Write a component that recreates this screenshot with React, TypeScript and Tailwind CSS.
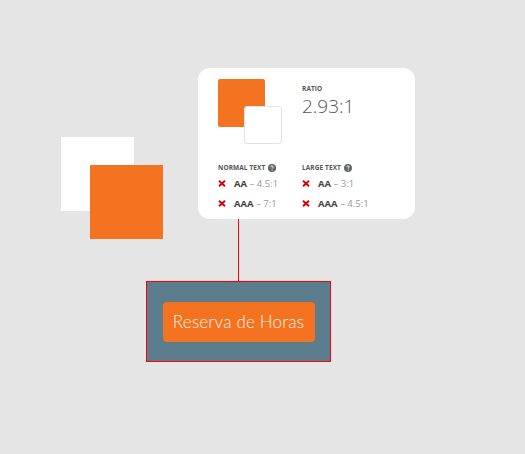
import type { ReactNode } from 'react'

const ORANGE = 'bg-[#f47321]'

function CrossIcon() {
  return (
    <svg width="8" height="7" viewBox="0 0 8 7" className="shrink-0">
      <path d="M1 0.8 L7 6.2 M7 0.8 L1 6.2" stroke="#d40000" strokeWidth="1.9" strokeLinecap="butt" />
    </svg>
  )
}

function HelpIcon() {
  return (
    <svg width="8" height="8" viewBox="0 0 8 8" className="shrink-0">
      <circle cx="4" cy="4" r="4" fill="#666" />
      <path d="M2.8 3.1 C2.8 2.3 3.3 1.9 4 1.9 C4.7 1.9 5.2 2.3 5.2 2.9 C5.2 3.6 4.2 3.7 4.2 4.6" stroke="#fff" strokeWidth="0.9" fill="none" />
      <circle cx="4.2" cy="6" r="0.55" fill="#fff" />
    </svg>
  )
}

function Label({ children }: { children: ReactNode }) {
  return <div className="text-[6.5px] font-bold uppercase leading-[8px] tracking-[0.1px] text-[#555]">{children}</div>
}

function Check({ level, ratio }: { level: string; ratio: string }) {
  return (
    <div className="flex h-[20px] items-center gap-[8px] text-[9.5px] leading-none">
      <CrossIcon />
      <span>
        <span className="font-bold text-[#444]">{level}</span>
        <span className="text-[#999]"> – {ratio}</span>
      </span>
    </div>
  )
}

function ContrastCard() {
  return (
    <div className="grid h-[151px] w-[217px] grid-cols-[84px_1fr] rounded-[12px] bg-white pl-[20px] pt-[11px] font-['Open_Sans',sans-serif]">
      <div className="relative h-[65px] w-[64px]">
        <div className={`absolute left-0 top-0 h-[48px] w-[47px] rounded-[2px] ${ORANGE}`} />
        <div className="absolute left-[26px] top-[27px] h-[38px] w-[38px] rounded-[3px] border border-[#e2e2e2] bg-white" />
      </div>
      <div className="pt-[6px]">
        <Label>Ratio</Label>
        <div className="mt-[2px] text-[19px] font-light leading-[22px] text-[#555]">2.93:1</div>
      </div>

      <div className="mt-[14px]">
        <div className="flex items-center gap-[3px]">
          <Label>Normal text</Label>
          <HelpIcon />
        </div>
        <div className="mt-[2px]">
          <Check level="AA" ratio="4.5:1" />
          <Check level="AAA" ratio="7:1" />
        </div>
      </div>
      <div className="mt-[14px]">
        <div className="flex items-center gap-[3px]">
          <Label>Large text</Label>
          <HelpIcon />
        </div>
        <div className="mt-[2px]">
          <Check level="AA" ratio="3:1" />
          <Check level="AAA" ratio="4.5:1" />
        </div>
      </div>
    </div>
  )
}

export default function App() {
  return (
    <div className="h-[454px] w-full overflow-hidden bg-[#e5e5e5]">
      <div className="flex items-start pt-[68px]">
        <div className="relative ml-[61px] mt-[69px] h-[102px] w-[102px] shrink-0">
          <div className="absolute left-0 top-0 h-[74px] w-[73px] bg-white" />
          <div className={`absolute left-[29px] top-[28px] h-[74px] w-[73px] ${ORANGE}`} />
        </div>

        <div className="ml-[35px] flex flex-col items-start">
          <ContrastCard />
          <div className="ml-[40px] h-[62px] w-px bg-[#ff0000]" />
          <div className="-ml-[52px] flex h-[81px] w-[185px] items-center justify-center border border-[#ff0000] bg-[#5b7d8e]">
            <button
              type="button"
              className={`h-[40px] w-[152px] rounded-[4px] ${ORANGE} font-['Lato',sans-serif] text-[17px] font-light tracking-[0.2px] text-white/90`}
            >
              Reserva de Horas
            </button>
          </div>
        </div>
      </div>
    </div>
  )
}
